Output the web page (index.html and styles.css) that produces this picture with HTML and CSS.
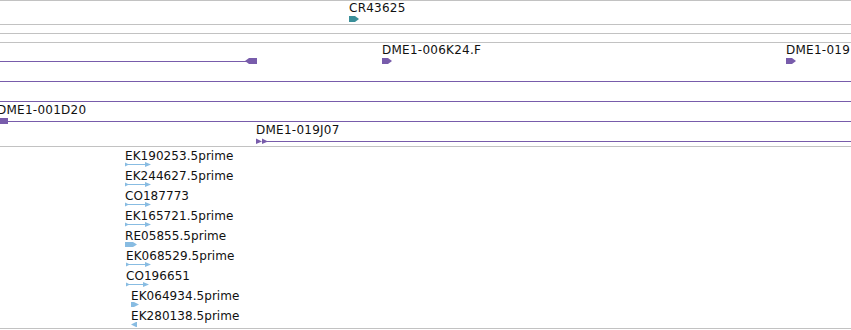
FILE: index.html
```html
<!DOCTYPE html>
<html lang="en">
<head>
    <meta charset="UTF-8">
    <title>Track view</title>
    <link rel="stylesheet" href="styles.css">
</head>
<body>
    <div class="view">
        <!-- gene track -->
        <div class="track track-gene">
            <div class="row">
                <div class="feat" style="left: 349px;">
                    <span class="lbl">CR43625</span>
                    <svg class="glyph teal" width="10" height="6"><path d="M0 0H6L10 3L6 6H0Z"/></svg>
                </div>
            </div>
        </div>

        <div class="track track-empty"></div>
        <div class="track track-empty"></div>

        <!-- clone ends -->
        <div class="track track-clone">
            <div class="row">
                <div class="feat" style="left: 0;">
                    <svg class="glyph purple" width="257" height="6"><rect x="0" y="3" width="248" height="1"/><path d="M245 3L249 0H257V6H249Z"/></svg>
                </div>
                <div class="feat" style="left: 382px;">
                    <span class="lbl">DME1-006K24.F</span>
                    <svg class="glyph purple" width="10" height="6"><path d="M0 0H6L10 3L6 6H0Z"/></svg>
                </div>
                <div class="feat" style="left: 786px;">
                    <span class="lbl">DME1-019</span>
                    <svg class="glyph purple" width="10" height="6"><path d="M0 0H6L10 3L6 6H0Z"/></svg>
                </div>
            </div>
            <div class="row">
                <div class="feat" style="left: 0;">
                    <svg class="glyph purple" width="851" height="6"><rect x="0" y="3" width="851" height="1"/></svg>
                </div>
            </div>
            <div class="row">
                <div class="feat" style="left: 0;">
                    <svg class="glyph purple" width="851" height="6"><rect x="0" y="3" width="851" height="1"/></svg>
                </div>
            </div>
            <div class="row">
                <div class="feat" style="left: -3px;">
                    <span class="lbl">DME1-001D20</span>
                    <svg class="glyph purple" width="854" height="6"><rect x="0" y="3" width="854" height="1"/><rect x="0" y="0" width="11" height="6"/></svg>
                </div>
            </div>
            <div class="row">
                <div class="feat" style="left: 256px;">
                    <span class="lbl">DME1-019J07</span>
                    <svg class="glyph purple" width="595" height="6"><path d="M0 0.5L6 3.5L0 6Z"/><path d="M6 0.5L12 3.5L6 6Z"/><rect x="8" y="3" width="587" height="1"/></svg>
                </div>
            </div>
        </div>

        <!-- ESTs -->
        <div class="track track-est">
            <div class="row">
                <div class="feat" style="left: 125px;">
                    <span class="lbl">EK190253.5prime</span>
                    <svg class="glyph blue" width="26" height="7"><path d="M0 1.5L3 3V4L0 5.5Z"/><rect x="0" y="3" width="21" height="1"/><path d="M20 1L26 3.5L20 6Z"/></svg>
                </div>
            </div>
            <div class="row">
                <div class="feat" style="left: 125px;">
                    <span class="lbl">EK244627.5prime</span>
                    <svg class="glyph blue" width="26" height="7"><path d="M0 1.5L3 3V4L0 5.5Z"/><rect x="0" y="3" width="21" height="1"/><path d="M20 1L26 3.5L20 6Z"/></svg>
                </div>
            </div>
            <div class="row">
                <div class="feat" style="left: 125px;">
                    <span class="lbl">CO187773</span>
                    <svg class="glyph blue" width="26" height="7"><path d="M0 1.5L3 3V4L0 5.5Z"/><rect x="0" y="3" width="21" height="1"/><path d="M20 1L26 3.5L20 6Z"/></svg>
                </div>
            </div>
            <div class="row">
                <div class="feat" style="left: 125px;">
                    <span class="lbl">EK165721.5prime</span>
                    <svg class="glyph blue" width="26" height="7"><path d="M0 1.5L3 3V4L0 5.5Z"/><rect x="0" y="3" width="21" height="1"/><path d="M20 1L26 3.5L20 6Z"/></svg>
                </div>
            </div>
            <div class="row">
                <div class="feat" style="left: 125px;">
                    <span class="lbl">RE05855.5prime</span>
                    <svg class="glyph blue" width="12" height="7"><path d="M0 1H8L12 3.5L8 6H0Z"/></svg>
                </div>
            </div>
            <div class="row">
                <div class="feat" style="left: 126px;">
                    <span class="lbl">EK068529.5prime</span>
                    <svg class="glyph blue" width="25" height="7"><path d="M0 1.5L3 3V4L0 5.5Z"/><rect x="0" y="3" width="20" height="1"/><path d="M19 1L25 3.5L19 6Z"/></svg>
                </div>
            </div>
            <div class="row">
                <div class="feat" style="left: 126px;">
                    <span class="lbl">CO196651</span>
                    <svg class="glyph blue" width="23" height="7"><path d="M0 1.5L3 3V4L0 5.5Z"/><rect x="0" y="3" width="18" height="1"/><path d="M17 1L23 3.5L17 6Z"/></svg>
                </div>
            </div>
            <div class="row">
                <div class="feat" style="left: 131px;">
                    <span class="lbl">EK064934.5prime</span>
                    <svg class="glyph blue" width="8" height="7"><path d="M0 1H3L8 3.5L3 6H0Z"/></svg>
                </div>
            </div>
            <div class="row">
                <div class="feat" style="left: 131px;">
                    <span class="lbl">EK280138.5prime</span>
                    <svg class="glyph blue" width="6" height="7"><path d="M0 3.5L5 1H6V6H5Z"/></svg>
                </div>
            </div>
        </div>
    </div>
</body>
</html>
```

FILE: styles.css
```css
:root {
    --rule-color: #c2c2c2;
    --purple: #785cab;
    --teal: #3a8f99;
    --blue: #88bce2;
    --text-color: #111;
    --font-family: "DejaVu Sans", "Noto Sans", sans-serif;
}

* {
    margin: 0;
    padding: 0;
    box-sizing: border-box;
}

body {
    width: 851px;
    height: 330px;
    overflow: hidden;
    background: #fff;
    font-family: var(--font-family);
    font-size: 12px;
    color: var(--text-color);
}

.view {
    display: flex;
    flex-direction: column;
}

/* 每一條 track 以灰線分隔 */
.track {
    border-top: 1px solid var(--rule-color);
    position: relative;
    overflow: hidden;
}
.track:last-child {
    border-bottom: 1px solid var(--rule-color);
}

.track-gene  { height: 24px; }
.track-empty { height: 9px; }
.track-clone { height: 104px; }
.track-est   { height: 183px; }

.row {
    position: relative;
    height: 20px;
}

.feat {
    position: absolute;
    top: 0;
    height: 20px;
}

.lbl {
    position: absolute;
    left: 0;
    top: 0;
    line-height: 14px;
    letter-spacing: 0.25px;
    white-space: nowrap;
}

.glyph {
    position: absolute;
    left: 0;
    top: 15px;
    display: block;
}

.track-est .lbl { top: 2px; letter-spacing: 0.05px; }
.track-est .glyph { top: 14px; }

.purple { fill: var(--purple); }
.teal   { fill: var(--teal); }
.blue   { fill: var(--blue); }
```
